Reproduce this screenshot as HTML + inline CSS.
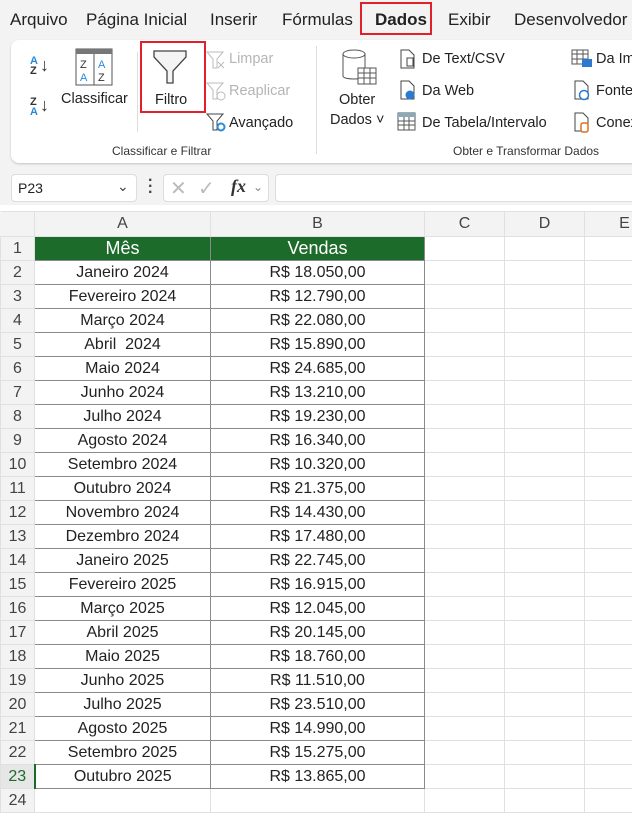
<!DOCTYPE html>
<html><head><meta charset="utf-8"><style>
*{margin:0;padding:0;box-sizing:border-box}
body{width:632px;height:792px;overflow:hidden;background:#f3f3f3;font-family:"Liberation Sans","DejaVu Sans",sans-serif;position:relative;color:#222}
.a{position:absolute;white-space:nowrap}
.tab{font-size:17px;top:10px;color:#222}
.rb{font-size:14.5px;color:#222}
.dis{color:#b5b5b5}
.grid{position:absolute;left:0;top:211px;width:664px}
table{border-collapse:collapse;table-layout:fixed;font-size:16px;width:664px}
td{height:24px;text-align:center;border:1px solid #e0e0e0;background:#fff;padding:0;overflow:hidden;white-space:nowrap}
td.rh{background:#f3f3f3;color:#444;border-color:#e0e0e0;text-align:center}
tr.ch td{background:#f3f3f3;color:#444;height:25px}
td.d{border:1px solid #8a8a8a}
td.h{background:#1d6b2a;color:#fff;font-size:18px;border:1px solid #8a8a8a}
</style></head><body>
<div class="a tab" style="left:10px">Arquivo</div>
<div class="a tab" style="left:86px">Página Inicial</div>
<div class="a tab" style="left:210px">Inserir</div>
<div class="a tab" style="left:282px">Fórmulas</div>
<div class="a tab" style="left:375px;font-weight:bold">Dados</div>
<div class="a" style="left:360px;top:2px;width:72px;height:33px;border:2px solid #e0202a"></div>
<div class="a tab" style="left:448px">Exibir</div>
<div class="a tab" style="left:514px">Desenvolvedor</div>

<div class="a" style="left:11px;top:40px;width:640px;height:123px;background:#fff;border-radius:8px;box-shadow:0 1px 2px rgba(0,0,0,.2)"></div>
<div class="a" style="left:30px;top:56px;font-size:11px;line-height:10px;font-weight:bold;color:#2a8ad8">A<br><span style="color:#333">Z</span></div>
<div class="a" style="left:40px;top:55px;font-size:18px;color:#333">↓</div>
<div class="a" style="left:30px;top:97px;font-size:11px;line-height:10px;font-weight:bold;color:#333">Z<br><span style="color:#2a8ad8">A</span></div>
<div class="a" style="left:40px;top:95px;font-size:18px;color:#333">↓</div>
<svg class="a" style="left:75px;top:48px" width="38" height="38"><rect x="1" y="1" width="36" height="36" fill="#fff" stroke="#555"/><rect x="1" y="1" width="36" height="5" fill="#777"/><line x1="19" y1="6" x2="19" y2="37" stroke="#555"/><text x="5" y="20" font-size="11" fill="#333">Z</text><text x="5" y="33" font-size="11" fill="#2a8ad8">A</text><text x="23" y="20" font-size="11" fill="#2a8ad8">A</text><text x="23" y="33" font-size="11" fill="#333">Z</text></svg>
<div class="a rb" style="left:61px;top:91px">Classificar</div>
<div class="a" style="left:137px;top:52px;width:1px;height:80px;background:#ddd"></div>
<svg class="a" style="left:152px;top:49px" width="36" height="36"><path d="M2 2 H34 V8 L21 22 V34 H15 V22 L2 8 Z" fill="#f4f4f4" stroke="#444" stroke-width="1.3"/></svg>
<div class="a rb" style="left:155px;top:92px">Filtro</div>
<div class="a" style="left:140px;top:41px;width:66px;height:72px;border:2px solid #e0202a"></div>
<svg class="a" style="left:205px;top:50px" width="22" height="22"><path d="M2 2H18L12 9V18H8V9Z" fill="none" stroke="#bbb"/><path d="M13 12l6 6M19 12l-6 6" stroke="#bbb"/></svg>
<div class="a rb dis" style="left:229px;top:51px">Limpar</div>
<svg class="a" style="left:205px;top:81px" width="22" height="22"><path d="M2 2H18L12 9V18H8V9Z" fill="none" stroke="#bbb"/><circle cx="16" cy="15" r="4" fill="none" stroke="#bbb"/></svg>
<div class="a rb dis" style="left:229px;top:83px">Reaplicar</div>
<svg class="a" style="left:205px;top:112px" width="22" height="22"><path d="M2 2H18L12 9V18H8V9Z" fill="none" stroke="#444"/><circle cx="16" cy="15" r="3.5" fill="none" stroke="#2a8ad8" stroke-width="2"/></svg>
<div class="a rb" style="left:229px;top:115px">Avançado</div>
<div class="a" style="left:112px;top:144px;font-size:12px;color:#333">Classificar e Filtrar</div>
<div class="a" style="left:316px;top:46px;width:1px;height:108px;background:#ddd"></div>
<svg class="a" style="left:340px;top:48px" width="40" height="42"><path d="M3 6 V28 C3 32 25 32 25 28 V6" fill="#fff" stroke="#555"/><ellipse cx="14" cy="6" rx="11" ry="4" fill="#fff" stroke="#555"/><rect x="18" y="20" width="18" height="16" fill="#fff" stroke="#555"/><path d="M18 25H36M18 30H36M24 20V36M30 20V36" stroke="#555"/></svg>
<div class="a rb" style="left:339px;top:92px">Obter</div>
<div class="a rb" style="left:330px;top:112px">Dados ˅</div>
<svg class="a" style="left:398px;top:49px" width="20" height="20"><path d="M3 1H11L16 6V19H3Z" fill="#fff" stroke="#444"/><rect x="9" y="9" width="6" height="8" fill="#fff" stroke="#444"/></svg>
<div class="a rb" style="left:422px;top:51px">De Text/CSV</div>
<svg class="a" style="left:398px;top:80px" width="20" height="20"><path d="M3 1H11L16 6V19H3Z" fill="#fff" stroke="#444"/><circle cx="12" cy="15" r="4.5" fill="#2a7ad0"/></svg>
<div class="a rb" style="left:422px;top:83px">Da Web</div>
<svg class="a" style="left:397px;top:112px" width="20" height="20"><rect x="1" y="1" width="17" height="17" fill="#fff" stroke="#555"/><rect x="1" y="1" width="17" height="4" fill="#8ab"/><path d="M1 9H18M1 13H18M7 5V18M12 5V18" stroke="#555"/></svg>
<div class="a rb" style="left:422px;top:115px">De Tabela/Intervalo</div>
<svg class="a" style="left:571px;top:49px" width="22" height="20"><rect x="1" y="1" width="16" height="14" fill="#fff" stroke="#555"/><path d="M1 5H17M1 10H17M6 1V15M12 1V15" stroke="#555"/><rect x="11" y="10" width="10" height="8" fill="#2a7ad0"/></svg>
<div class="a rb" style="left:596px;top:51px">Da Im</div>
<svg class="a" style="left:572px;top:80px" width="20" height="22"><path d="M3 1H11L16 6V19H3Z" fill="#fff" stroke="#444"/><circle cx="12" cy="15" r="4.5" fill="#fff" stroke="#2a7ad0" stroke-width="1.5"/></svg>
<div class="a rb" style="left:596px;top:83px">Fonte</div>
<svg class="a" style="left:572px;top:112px" width="20" height="22"><path d="M3 1H11L16 6V19H3Z" fill="#fff" stroke="#444"/><rect x="9" y="11" width="7" height="9" rx="2" fill="#fff" stroke="#e07020" stroke-width="1.5"/></svg>
<div class="a rb" style="left:596px;top:115px">Conex</div>
<div class="a" style="left:453px;top:144px;font-size:12px;color:#333">Obter e Transformar Dados</div>

<div class="a" style="left:11px;top:174px;width:126px;height:28px;background:#fff;border:1px solid #ddd;border-radius:4px"></div>
<div class="a" style="left:18px;top:180px;font-size:14px">P23</div>
<div class="a" style="left:117px;top:178px;font-size:14px;color:#444">⌄</div>
<div class="a" style="left:148px;top:178px;font-size:16px;font-weight:bold;color:#444;line-height:6px">·<br>·<br>·</div>
<div class="a" style="left:163px;top:174px;width:106px;height:28px;background:#fff;border:1px solid #ddd;border-radius:4px"></div>
<div class="a" style="left:170px;top:176px;font-size:20px;color:#bbb">✕</div>
<div class="a" style="left:198px;top:176px;font-size:20px;color:#bbb">✓</div>
<div class="a" style="left:231px;top:176px;font-size:18px;font-style:italic;font-family:'Liberation Serif',serif;color:#333"><b>fx</b></div>
<div class="a" style="left:253px;top:180px;font-size:12px;color:#888">⌄</div>
<div class="a" style="left:275px;top:174px;width:380px;height:28px;background:#fff;border:1px solid #ddd;border-radius:4px"></div>
<div class="a" style="left:0;top:205px;width:632px;height:6px;background:#fff"></div>

<div class="grid">
<table>
<colgroup><col style="width:34px"><col style="width:176px"><col style="width:214px"><col style="width:80px"><col style="width:80px"><col style="width:80px"></colgroup>
<tr class="ch"><td style="background:#f3f3f3;border-left:none"></td><td>A</td><td>B</td><td>C</td><td>D</td><td>E</td></tr>
<tr><td class="rh">1</td><td class="h">Mês</td><td class="h">Vendas</td><td></td><td></td><td></td></tr>
<tr><td class="rh">2</td><td class="d">Janeiro 2024</td><td class="d">R$ 18.050,00</td><td></td><td></td><td></td></tr>
<tr><td class="rh">3</td><td class="d">Fevereiro 2024</td><td class="d">R$ 12.790,00</td><td></td><td></td><td></td></tr>
<tr><td class="rh">4</td><td class="d">Março 2024</td><td class="d">R$ 22.080,00</td><td></td><td></td><td></td></tr>
<tr><td class="rh">5</td><td class="d">Abril&nbsp; 2024</td><td class="d">R$ 15.890,00</td><td></td><td></td><td></td></tr>
<tr><td class="rh">6</td><td class="d">Maio 2024</td><td class="d">R$ 24.685,00</td><td></td><td></td><td></td></tr>
<tr><td class="rh">7</td><td class="d">Junho 2024</td><td class="d">R$ 13.210,00</td><td></td><td></td><td></td></tr>
<tr><td class="rh">8</td><td class="d">Julho 2024</td><td class="d">R$ 19.230,00</td><td></td><td></td><td></td></tr>
<tr><td class="rh">9</td><td class="d">Agosto 2024</td><td class="d">R$ 16.340,00</td><td></td><td></td><td></td></tr>
<tr><td class="rh">10</td><td class="d">Setembro 2024</td><td class="d">R$ 10.320,00</td><td></td><td></td><td></td></tr>
<tr><td class="rh">11</td><td class="d">Outubro 2024</td><td class="d">R$ 21.375,00</td><td></td><td></td><td></td></tr>
<tr><td class="rh">12</td><td class="d">Novembro 2024</td><td class="d">R$ 14.430,00</td><td></td><td></td><td></td></tr>
<tr><td class="rh">13</td><td class="d">Dezembro 2024</td><td class="d">R$ 17.480,00</td><td></td><td></td><td></td></tr>
<tr><td class="rh">14</td><td class="d">Janeiro 2025</td><td class="d">R$ 22.745,00</td><td></td><td></td><td></td></tr>
<tr><td class="rh">15</td><td class="d">Fevereiro 2025</td><td class="d">R$ 16.915,00</td><td></td><td></td><td></td></tr>
<tr><td class="rh">16</td><td class="d">Março 2025</td><td class="d">R$ 12.045,00</td><td></td><td></td><td></td></tr>
<tr><td class="rh">17</td><td class="d">Abril 2025</td><td class="d">R$ 20.145,00</td><td></td><td></td><td></td></tr>
<tr><td class="rh">18</td><td class="d">Maio 2025</td><td class="d">R$ 18.760,00</td><td></td><td></td><td></td></tr>
<tr><td class="rh">19</td><td class="d">Junho 2025</td><td class="d">R$ 11.510,00</td><td></td><td></td><td></td></tr>
<tr><td class="rh">20</td><td class="d">Julho 2025</td><td class="d">R$ 23.510,00</td><td></td><td></td><td></td></tr>
<tr><td class="rh">21</td><td class="d">Agosto 2025</td><td class="d">R$ 14.990,00</td><td></td><td></td><td></td></tr>
<tr><td class="rh">22</td><td class="d">Setembro 2025</td><td class="d">R$ 15.275,00</td><td></td><td></td><td></td></tr>
<tr><td class="rh" style="color:#1d6b2a;background:#e6e6e6;border-right:2px solid #1d6b2a">23</td><td class="d">Outubro 2025</td><td class="d">R$ 13.865,00</td><td></td><td></td><td></td></tr>
<tr><td class="rh">24</td><td></td><td></td><td></td><td></td><td></td></tr>
</table>
</div>
</body></html>
